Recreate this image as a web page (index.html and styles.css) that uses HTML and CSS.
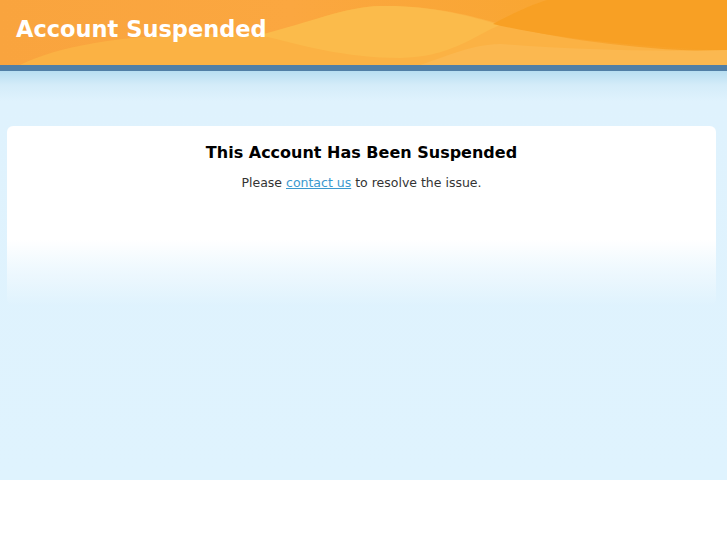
FILE: index.html
```html
<!DOCTYPE html>
<html lang="en">
<head>
  <meta charset="UTF-8">
  <title>Account Suspended</title>
  <link rel="stylesheet" href="styles.css">
</head>
<body>
  <div class="header">
    <svg class="waves" viewBox="0 0 727 65" preserveAspectRatio="none">
      <path d="M20 65 C 60 45, 140 30, 260 35 C 300 30, 330 8, 380 6 C 430 5, 470 15, 500 24 C 560 40, 640 50, 727 52 L727 65 Z" fill="#fbb244"/>
      <path d="M260 35 C 310 22, 345 7, 380 6 C 430 5, 470 16, 500 25 C 470 38, 450 57, 400 58 C 345 58, 300 45, 260 35 Z" fill="#fbbb4b"/>
      <path d="M420 65 C 450 55, 470 45, 500 44 C 580 50, 650 52, 727 50 L727 65 Z" fill="#fbb850"/>
      <path d="M547 0 L727 0 L727 50 C 650 48, 560 40, 493 24 C 510 15, 530 5, 547 0 Z" fill="#f8a024"/>
    </svg>
    <h1>Account Suspended</h1>
  </div>

  <div class="main">
    <div class="card">
      <h2>This Account Has Been Suspended</h2>
      <p>Please <a href="#">contact us</a> to resolve the issue.</p>
    </div>
  </div>
</body>
</html>
```

FILE: styles.css
```css
* {
  margin: 0;
  padding: 0;
  box-sizing: border-box;
}

body {
  font-family: "DejaVu Sans", Verdana, sans-serif;
  background: #ffffff;
  color: #333;
}

.header {
  position: relative;
  height: 71px;
  background: linear-gradient(90deg, #f9a43e 0%, #fba740 40%, #f9a632 75%, #f7a024 100%);
  border-bottom: 6px solid #517fa6;
  overflow: hidden;
}

.waves {
  position: absolute;
  top: 0;
  left: 0;
  width: 100%;
  height: 65px;
}

.header h1 {
  position: relative;
  padding: 15px 0 0 16px;
  font-size: 22.5px;
  font-weight: bold;
  color: #ffffff;
  line-height: 28px;
}

.main {
  height: 409px;
  padding: 55px 11px 0 7px;
  background: linear-gradient(180deg, #b8def1 0px, #d4ecf9 14px, #dff2fd 30px, #dff3fe 100%);
}

.card {
  height: 180px;
  padding-top: 17px;
  border-radius: 6px;
  text-align: center;
  background: linear-gradient(180deg, #ffffff 0px, #ffffff 114px, rgba(255, 255, 255, 0.55) 140px, rgba(255, 255, 255, 0) 180px);
}

.card h2 {
  font-size: 16px;
  font-weight: bold;
  color: #000;
  line-height: 20px;
}

.card p {
  margin-top: 11px;
  font-size: 12.5px;
  line-height: 18px;
  color: #333;
}

.card a {
  color: #3b99cf;
}
```
